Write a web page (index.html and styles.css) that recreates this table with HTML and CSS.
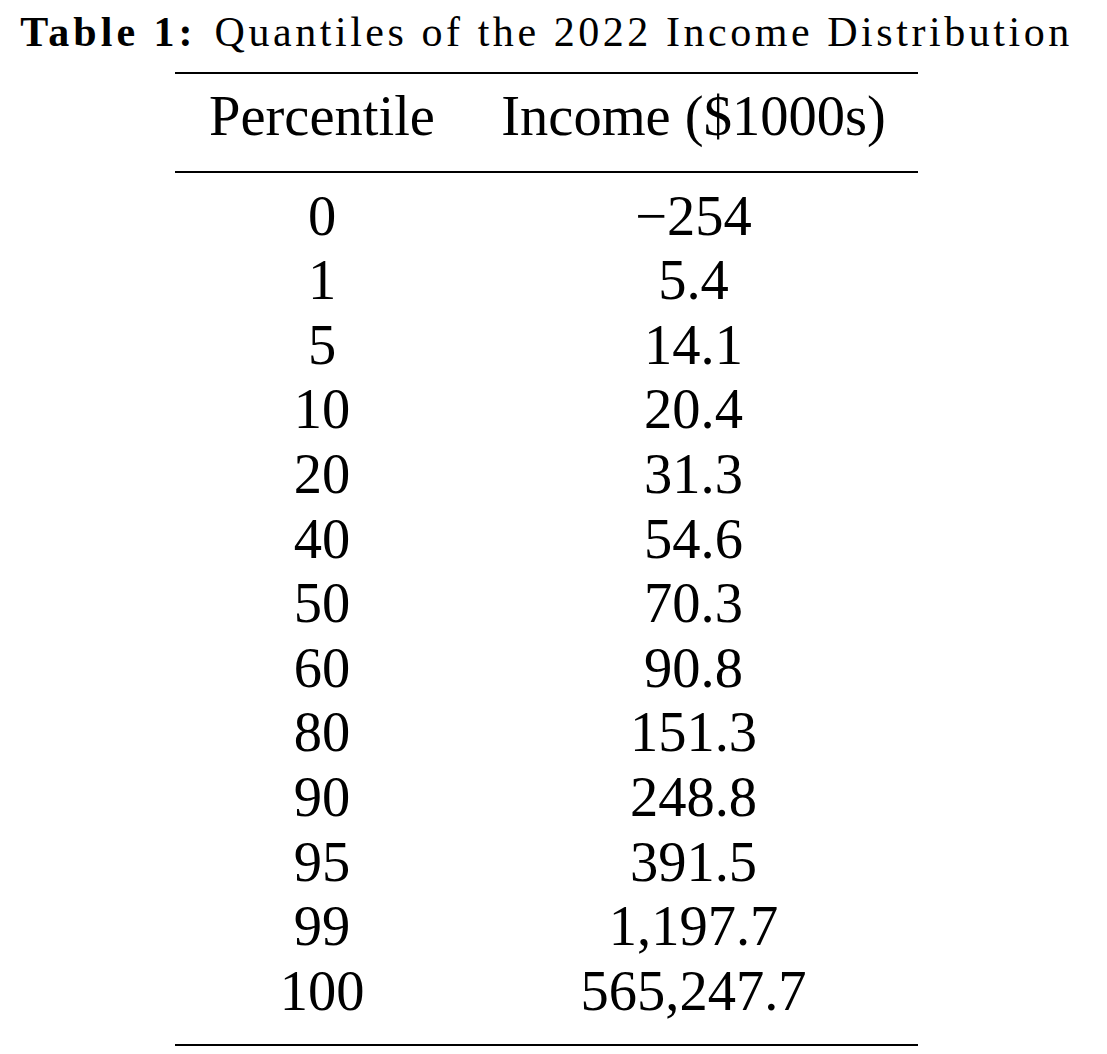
FILE: index.html
```html
<!DOCTYPE html>
<html>
<head>
<meta charset="utf-8">
<link rel="stylesheet" href="styles.css">
</head>
<body>
<div class="page">
  <p class="caption"><span class="label">Table 1:</span><span class="title">Quantiles of the 2022 Income Distribution</span></p>
  <table class="quantiles">
    <thead>
      <tr><th class="c1">Percentile</th><th class="c2">Income ($1000s)</th></tr>
    </thead>
    <tbody>
      <tr><td>0</td><td>&minus;254</td></tr>
      <tr><td>1</td><td>5.4</td></tr>
      <tr><td>5</td><td>14.1</td></tr>
      <tr><td>10</td><td>20.4</td></tr>
      <tr><td>20</td><td>31.3</td></tr>
      <tr><td>40</td><td>54.6</td></tr>
      <tr><td>50</td><td>70.3</td></tr>
      <tr><td>60</td><td>90.8</td></tr>
      <tr><td>80</td><td>151.3</td></tr>
      <tr><td>90</td><td>248.8</td></tr>
      <tr><td>95</td><td>391.5</td></tr>
      <tr><td>99</td><td>1,197.7</td></tr>
      <tr><td>100</td><td>565,247.7</td></tr>
    </tbody>
  </table>
</div>
</body>
</html>
```
FILE: styles.css
```css
html, body {
  margin: 0;
  padding: 0;
  background: #ffffff;
  color: #000000;
}

.page {
  width: 1093px;
  padding-top: 7px;
  font-family: "Liberation Serif", "Times New Roman", serif;
}

.caption {
  margin: 0;
  text-align: center;
  font-size: 42px;
  line-height: 50px;
  white-space: nowrap;
}

.caption .label {
  font-weight: bold;
  letter-spacing: 4px;
  margin-right: 18px;
}

.caption .title {
  letter-spacing: 3.55px;
}

.quantiles {
  margin: 15px 0 0 175px;
  width: 743px;
  border-collapse: separate;
  border-spacing: 0;
  border-top: 2px solid #000;
  border-bottom: 2px solid #000;
  font-size: 56.5px;
  line-height: 64.6px;
  table-layout: fixed;
}

.quantiles .c1 {
  width: 294px;
}

.quantiles .c2 {
  width: 449px;
}

.quantiles th,
.quantiles td {
  padding: 0;
  text-align: center;
  font-weight: normal;
  white-space: nowrap;
}

.quantiles thead th {
  padding-top: 9.5px;
  padding-bottom: 23px;
  border-bottom: 2px solid #000;
}

.quantiles tbody tr:first-child td {
  padding-top: 10.5px;
}

.quantiles tbody tr:last-child td {
  padding-bottom: 20.7px;
}
```
